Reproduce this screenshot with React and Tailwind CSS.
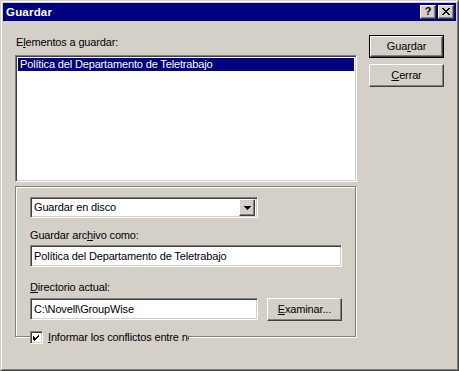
import React from "react";

const font = { fontFamily: '"Liberation Sans", Arial, sans-serif' };

function Raised({ className = "", children }) {
  return (
    <div
      className={
        "flex items-center justify-center bg-[#d4d0c8] border border-t-white border-l-white border-r-[#404040] border-b-[#404040] shadow-[inset_-1px_-1px_0_#808080] " +
        className
      }
    >
      {children}
    </div>
  );
}

function Sunken({ className = "", children }) {
  return (
    <div
      className={
        "bg-white border border-t-[#808080] border-l-[#808080] border-r-white border-b-white shadow-[inset_1px_1px_0_#404040,inset_-1px_-1px_0_#d4d0c8] " +
        className
      }
    >
      {children}
    </div>
  );
}

export default function App() {
  return (
    <div
      style={font}
      className="w-[459px] h-[371px] bg-[#d4d0c8] border border-t-[#d4d0c8] border-l-[#d4d0c8] border-r-[#404040] border-b-[#404040] text-[11px] tracking-[-0.15px] text-black leading-[13px] select-none"
    >
      <div className="w-full h-full border border-t-white border-l-white border-r-[#808080] border-b-[#808080] p-px flex flex-col">
        {/* Title bar */}
        <div className="h-[18px] bg-[#000080] flex items-center pl-[2px] pr-[2px]">
          <span className="text-white font-bold text-[11.5px] tracking-[0.2px] flex-1 pl-[1px]">Guardar</span>
          <div className="flex gap-[2px]">
            <Raised className="w-[16px] h-[14px]">
              <span className="font-bold text-[11px] leading-[11px] text-black -mt-px">?</span>
            </Raised>
            <Raised className="w-[16px] h-[14px]">
              <svg width="8" height="7" viewBox="0 0 8 7" className="-mt-px">
                <path d="M0 0h2v1h1v1h2v-1h1v-1h2v1h-1v1h-1v1h-1v1h1v1h1v1h1v1h-2v-1h-1v-1h-2v1h-1v1h-2v-1h1v-1h1v-1h1v-1h-1v-1h-1v-1h-1z" fill="#000" />
              </svg>
            </Raised>
          </div>
        </div>

        {/* Body */}
        <div className="flex pt-[14px] pl-[12px] pr-[12px]">
          {/* Left column */}
          <div className="w-[342px] flex flex-col">
            <div className="mt-[1px] h-[13px] pl-[1px]">
              E<span className="underline">l</span>ementos a guardar:
            </div>
            <Sunken className="mt-[6px] h-[127px] w-[342px] p-[2px]">
              <div className="h-[13px] bg-[#000080] text-white pl-[2px] leading-[13px]">
                Política del Departamento de Teletrabajo
              </div>
            </Sunken>

            {/* Group box */}
            <div className="relative mt-[4px] w-[341px] h-[151px] border border-[#808080] shadow-[1px_1px_0_#ffffff,inset_1px_1px_0_#ffffff] pl-[14px] pt-[10px]">
              {/* combobox */}
              <Sunken className="w-[228px] h-[21px] flex items-center pl-[3px] pr-[2px]">
                <span className="flex-1">Guardar en disco</span>
                <Raised className="w-[16px] h-[17px]">
                  <svg width="7" height="4" viewBox="0 0 7 4">
                    <path d="M0 0h7v1h-1v1h-1v1h-1v1h-1v-1h-1v-1h-1v-1h-1z" fill="#000" />
                  </svg>
                </Raised>
              </Sunken>

              <div className="mt-[11px] h-[13px]">
                Guardar arc<span className="underline">h</span>ivo como:
              </div>
              <Sunken className="mt-[3px] w-[312px] h-[22px] flex items-center pl-[3px]">
                Política del Departamento de Teletrabajo
              </Sunken>

              <div className="mt-[14px] h-[13px]">
                <span className="underline">D</span>irectorio actual:
              </div>
              <div className="mt-[4px] flex gap-[9px] items-start">
                <Sunken className="w-[228px] h-[22px] flex items-center pl-[3px]">
                  C:\Novell\GroupWise
                </Sunken>
                <Raised className="w-[75px] h-[23px]">
                  <span>
                    <span className="underline">E</span>xaminar...
                  </span>
                </Raised>
              </div>

              {/* Checkbox overlaying bottom border */}
              <div className="absolute left-[14px] top-[143px] w-[159px] h-[15px] bg-[#d4d0c8] flex items-center overflow-hidden whitespace-nowrap">
                <Sunken className="w-[13px] h-[13px] shrink-0 flex items-center justify-center">
                  <svg width="7" height="7" viewBox="0 0 7 7">
                    <path d="M6 0v3h-1v1h-1v1h-1v1h-1v1h-1v-1h-1v-1h-0v-3h1v1h1v1h1v-1h1v-1h1v-1h1z" fill="#000" />
                  </svg>
                </Sunken>
                <span className="ml-[5px]">
                  <span className="underline">I</span>nformar los conflictos entre nombres
                </span>
              </div>
            </div>
          </div>

          {/* Right column */}
          <div className="ml-[12px] flex flex-col gap-[6px]">
            <div className="border border-black">
              <Raised className="w-[73px] h-[21px]">
                <span>
                  Gua<span className="underline">r</span>dar
                </span>
              </Raised>
            </div>
            <Raised className="w-[75px] h-[23px]">
              <span>
                <span className="underline">C</span>errar
              </span>
            </Raised>
          </div>
        </div>
      </div>
    </div>
  );
}
